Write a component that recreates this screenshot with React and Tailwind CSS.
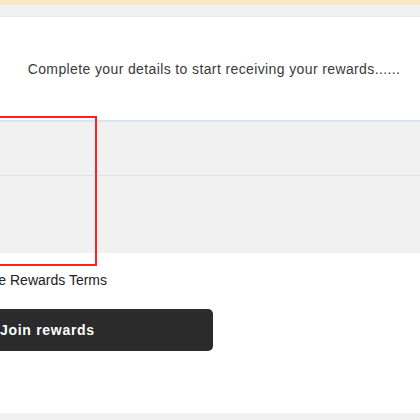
export default function App() {
  return (
    <div className="w-[420px] h-[420px] overflow-hidden flex flex-col bg-white" style={{ fontFamily: '"Liberation Sans", Arial, sans-serif' }}>
      {/* top strips */}
      <div className="h-[5px] bg-[#f8e8c8] shrink-0" />
      <div className="h-[12px] bg-[#f1f1f1] border-b border-[#e8e8e8] shrink-0" />

      <div className="flex-1 flex flex-col">
        <p className="mt-[42px] text-center text-[14px] leading-[20px] tracking-[0.38px] text-[#3a3a3a] pl-[8px]">
          Complete your details to start receiving your rewards......
        </p>

        {/* form column, starts left of the viewport */}
        <div className="ml-[-40px] mt-[41px] relative">
          <div className="bg-[#f1f1f1]">
            <div className="h-[55px] border-t-2 border-[#dbe4ee]" />
            <div className="h-[78px] border-t border-[#dbe4ee]" />
          </div>

          {/* highlight box */}
          <div className="absolute left-[-4px] top-[-4px] w-[141px] h-[150px] border-2 border-[#ff2020] pointer-events-none" />

          <div className="w-[147px] flex justify-end mt-[17px]">
            <span className="whitespace-nowrap text-[14px] leading-[20px] text-[#222]">I agree to the Rewards Terms</span>
          </div>

          <button className="mt-[19px] w-[253px] h-[42px] rounded-[5px] bg-[#2b2b2b] text-white text-[14px] font-bold tracking-[0.7px] text-left pl-[40px]">
            Join rewards
          </button>
        </div>
      </div>

      <div className="h-[7px] bg-[#f1f1f1] shrink-0" />
    </div>
  );
}
